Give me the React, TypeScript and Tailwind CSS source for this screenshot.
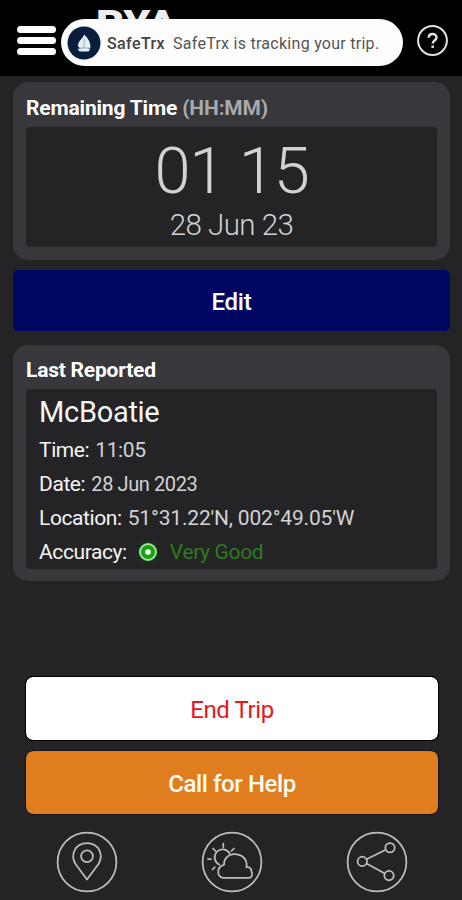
import React from 'react';

function Circle({ children }: { children: React.ReactNode }) {
  return (
    <svg width="62" height="62" viewBox="0 0 62 62" fill="none" stroke="#bdbdbd" strokeWidth="1.75" strokeLinecap="round" strokeLinejoin="round">
      <circle cx="31" cy="31" r="29.4" />
      {children}
    </svg>
  );
}

function Row({ label, children }: { label: string; children: React.ReactNode }) {
  return (
    <div className="flex h-[34px] items-center whitespace-nowrap text-[21px] leading-[34px] text-[#d2d2d2]">
      <span className="mr-[6px] tracking-[-0.4px] text-[#f4f4f4]">{label}</span>
      {children}
    </div>
  );
}

export default function App() {
  return (
    <div className="flex h-[900px] w-[462px] flex-col overflow-hidden bg-[#242426] font-['Roboto',sans-serif]">
      <header className="relative flex h-[76px] shrink-0 items-start bg-black">
        <div className="absolute left-[96px] top-[3px] origin-left scale-x-[1.2] text-[36px] font-black leading-[42px] text-[#eeeeee]">RYA</div>
        <div className="ml-[16.5px] mt-[26px] flex w-[39.5px] shrink-0 flex-col gap-[4.5px]">
          <span className="h-[6.5px] rounded-full bg-white" />
          <span className="h-[6.5px] rounded-full bg-white" />
          <span className="h-[6.5px] rounded-full bg-white" />
        </div>
        <div className="relative ml-[5px] mt-[19px] flex h-[47px] w-[342px] shrink-0 items-center whitespace-nowrap rounded-full bg-[#fdfdfd] pl-[6px]">
          <svg width="34" height="34" viewBox="0 0 34 34">
            <circle cx="17" cy="17" r="16.5" fill="#071f3d" />
            <path d="M17.3 8.500C21.500 13 24 17 23.300 22H20l3.300.8-1.700 2.800h-9L10.500 23l3.500-.8c-4-.7-3.500-4-1.200-7.400 1.400-1.800 3-3 4.500-6.300Z" fill="#e8edf2" />
            <path d="M17.200 12v10M13 22h9" stroke="#8796a5" strokeWidth=".7" />
          </svg>
          <span className="ml-[6px] pt-[2px] text-[16px] font-medium tracking-[0.4px] text-[#434343]">SafeTrx</span>
          <span className="ml-[8px] pt-[2px] text-[16px] tracking-[0.27px] text-[#555555]">SafeTrx is tracking your trip.</span>
        </div>
        <svg className="ml-[13px] mt-[24px]" width="33" height="33" viewBox="0 0 33 33" fill="none" stroke="#e2e2e2">
          <circle cx="16.5" cy="16.5" r="14.4" strokeWidth="2" />
          <path d="M12.700 13.800c0-5 7.800-5 7.800-.3 0 3-3.800 3-3.800 6" strokeWidth="2.4" />
          <path d="M16.700 21.600v2.300" strokeWidth="2.6" />
        </svg>
      </header>

      <main className="flex flex-1 flex-col px-[13px] pt-[6px]">
        <section className="flex h-[178px] w-[437px] flex-col rounded-[15px] bg-[#37373c] px-[13px] pb-[13px]">
          <h2 className="h-[45px] whitespace-nowrap pt-[3px] text-[21px] font-bold leading-[46px] tracking-[-0.18px] text-white">
            Remaining Time <span className="text-[#a9a9ab]">(HH:MM)</span>
          </h2>
          <div className="flex flex-1 flex-col items-center rounded-[4px] bg-[#242426] text-[#d2d2d2]">
            <div className="mt-[11px] whitespace-nowrap text-[65px] font-light leading-[66px] tracking-[-1.2px]">01 15</div>
            <div className="mt-[4px] whitespace-nowrap text-[29.5px] font-light leading-[34px] tracking-[-0.55px]">28 Jun 23</div>
          </div>
        </section>

        <button className="mt-[10px] h-[61px] w-[437px] rounded-[5px] bg-[#000763] pt-[2px] text-[24px] font-medium tracking-[-0.2px] text-white">Edit</button>

        <section className="mt-[14px] flex h-[236px] w-[437px] flex-col rounded-[15px] bg-[#37373c] px-[13px] pb-[12px]">
          <h2 className="h-[44px] pt-[2px] text-[21px] font-bold leading-[46px] tracking-[-0.22px] text-white">Last Reported</h2>
          <div className="flex-1 rounded-[4px] bg-[#242426] pl-[13px]">
            <div className="h-[44px] text-[29px] leading-[46px] tracking-[-0.3px] text-[#f7f7f7]">McBoatie</div>
            <Row label="Time:"><span className="tracking-[-0.4px]">11:05</span></Row>
            <Row label="Date:"><span className="text-[20px] tracking-[-0.4px]">28 Jun 2023</span></Row>
            <Row label="Location:"><span className="tracking-[-0.18px]">51°31.22'N, 002°49.05'W</span></Row>
            <Row label="Accuracy:">
              <svg className="ml-[3px]" width="24" height="24" viewBox="0 0 24 24">
                <circle cx="12" cy="12" r="11.5" fill="#173318" />
                <circle cx="12" cy="12" r="8" fill="#16a416" stroke="#a5dfa0" strokeWidth="2" />
                <circle cx="12" cy="12" r="2.8" fill="white" />
              </svg>
              <span className="ml-[10px] tracking-[-0.35px] text-[#2f7a1b]">Very Good</span>
            </Row>
          </div>
        </section>

        <div className="mt-[96px] flex flex-col gap-[11px] px-[13px]">
          <button className="h-[63px] w-[412px] rounded-[7px] bg-white pt-[2px] text-[24px] tracking-[-0.4px] text-[#e8161c] outline-1 outline-black">End Trip</button>
          <button className="h-[63px] w-[412px] rounded-[7px] bg-[#e07e1f] pt-[2px] text-[24px] font-medium tracking-[-0.4px] text-[#fffaf0] outline-1 outline-[#111518]">Call for Help</button>
        </div>

        <nav className="ml-[43px] mt-[17px] flex w-[352px] justify-between">
          <Circle>
            <path d="M31 48.500 19.500 33C14 24 19 12 31 12s17 12 11.500 21Z" />
            <circle cx="31" cy="25.300" r="5.900" />
          </Circle>
          <Circle>
            <path d="M18.200 33.500a8 8 0 1 1 10.500-11M22.300 12.500v3.500M12 17.500l2.500 2.500M33 17.500 30.500 20M7 28h3M11.500 38.500l2.300-2.300" />
            <path d="M22 46.800c-6.500-1-6.500-11.500 1-13-.5-13.500 19-14 22.200-3 .8 2 .4 3.500.3 5.500 3.500-.5 5.300 2 4.900 4 1.500 2.500.6 6.500-2.400 6.500Z" />
          </Circle>
          <Circle>
            <circle cx="16.300" cy="30.400" r="4.700" />
            <circle cx="44" cy="16.700" r="4.700" />
            <circle cx="43" cy="44.600" r="4.700" />
            <path d="m20.500 28.300 19.300-9.500M20.500 32.600l18.300 9.800" />
          </Circle>
        </nav>
      </main>
    </div>
  );
}
